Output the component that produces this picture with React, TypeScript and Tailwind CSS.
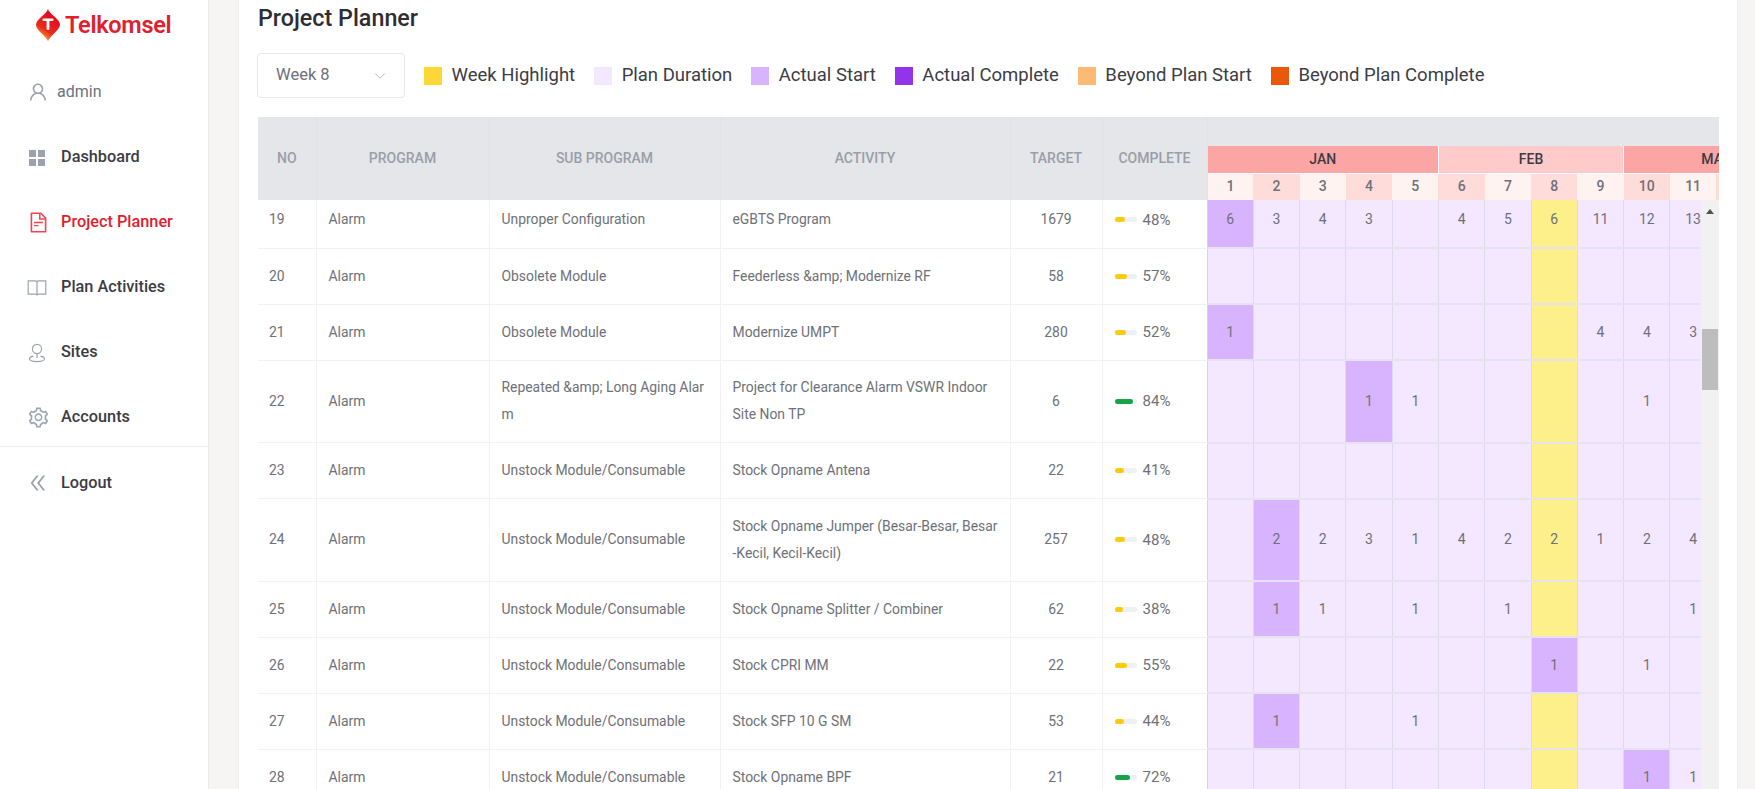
import { AiOutlineDoubleLeft, AiOutlineFileText, AiOutlineSetting, AiOutlineUser } from 'react-icons/ai';
import { ChevronDown } from 'lucide-react';
import type { ReactNode } from 'react';

const SitesIcon = () => (
  <svg width="20" height="20" viewBox="0 0 20 20" fill="none" stroke="currentColor" strokeWidth="1.2">
    <circle cx="10" cy="6" r="4.6" />
    <path d="M10 10.6V15" />
    <path d="M6.5 13.2C4.2 13.7 2.5 14.6 2.5 15.8C2.5 17.5 6 18.6 10 18.6C14 18.6 17.5 17.5 17.5 15.8C17.5 14.6 15.8 13.7 13.5 13.2" />
  </svg>
);

const GridIcon = () => (
  <svg width="20" height="20" viewBox="0 0 20 20" fill="currentColor">
    <rect x="2" y="2" width="7" height="7" />
    <rect x="11" y="2" width="7" height="7" />
    <rect x="2" y="11" width="7" height="7" />
    <rect x="11" y="11" width="7" height="7" />
  </svg>
);

const BookIcon = () => (
  <svg width="20" height="20" viewBox="0 0 20 20" fill="none" stroke="currentColor" strokeWidth="1.2">
    <path d="M10 4.5C10 3.6 9.4 2.8 8.4 2.8H1.2V16.2H8.4C9.4 16.2 10 16.6 10 17.4C10 16.6 10.6 16.2 11.6 16.2H18.8V2.8H11.6C10.6 2.8 10 3.6 10 4.5ZM10 4.5V17.4" />
  </svg>
);

const Logo = () => (
  <div className="h-[59px] pl-[36px] pt-[9px] flex items-start gap-[5px]">
    <svg width="24" height="32" viewBox="0 0 24 32">
      <defs>
        <linearGradient id="flame" x1="0.7" y1="0.2" x2="0.3" y2="1">
          <stop offset="0" stopColor="#e5091e" />
          <stop offset="0.6" stopColor="#ea2a1c" />
          <stop offset="1" stopColor="#f9b233" />
        </linearGradient>
      </defs>
      <path d="M12 0C13 5 24 10 24 15.5C24 21 15 26 12 32C9 26 0 21 0 16C0 10 10 6 12 0Z" fill="url(#flame)" />
      <rect x="6.5" y="9.5" width="11" height="2.6" rx="1" fill="#fff" />
      <rect x="10.6" y="10" width="2.8" height="11" rx="1" fill="#fff" />
    </svg>
    <span className="text-[23.5px] leading-[32px] font-semibold text-[#e0202f] tracking-[-0.3px]">Telkomsel</span>
  </div>
);

const menu: { label: string; icon: ReactNode; active?: boolean }[] = [
  { label: 'Dashboard', icon: <GridIcon /> },
  { label: 'Project Planner', icon: <AiOutlineFileText size={23} />, active: true },
  { label: 'Plan Activities', icon: <BookIcon /> },
  { label: 'Sites', icon: <SitesIcon /> },
  { label: 'Accounts', icon: <AiOutlineSetting size={23} /> },
];

const Sidebar = () => (
  <aside className="w-[209px] shrink-0 bg-white border-r border-[#eeeaea]">
    <Logo />
    <div className="h-[65px] pl-[27px] flex items-center gap-[8px] text-[16px] text-[#6b7280]">
      <span className="text-[#9ca3af]">
        <AiOutlineUser size={22} />
      </span>
      admin
    </div>
    <div className="pt-[1px]">
      {menu.map((item) => (
        <div key={item.label} className={`h-[65px] pl-[27px] flex items-center text-[16.3px] font-medium ${item.active ? 'text-[#e11d2e]' : 'text-[#3b3b44]'}`}>
          <span className={`w-[34px] flex items-center ${item.active ? 'text-[#ef4452]' : 'text-[#9ca3af]'}`}>{item.icon}</span>
          {item.label}
        </div>
      ))}
    </div>
    <div className="-mt-[4px] border-t border-[#f0eeee] h-[73px] pl-[27px] flex items-center text-[16.3px] font-medium text-[#3b3b44]">
      <span className="w-[34px] flex items-center text-[#9ca3af]">
        <AiOutlineDoubleLeft size={22} />
      </span>
      Logout
    </div>
  </aside>
);

const legend = [
  { label: 'Week Highlight', color: 'bg-[#fdd835]' },
  { label: 'Plan Duration', color: 'bg-[#f3e8ff]' },
  { label: 'Actual Start', color: 'bg-[#d8b4fe]' },
  { label: 'Actual Complete', color: 'bg-[#9333ea]' },
  { label: 'Beyond Plan Start', color: 'bg-[#fdba74]' },
  { label: 'Beyond Plan Complete', color: 'bg-[#ea580c]' },
];

const Cols = () => (
  <colgroup>
    <col className="w-[58px]" />
    <col className="w-[173px]" />
    <col className="w-[231px]" />
    <col className="w-[290px]" />
    <col className="w-[92px]" />
    <col className="w-[105px]" />
    {Array.from({ length: 13 }).map((_, i) => (
      <col key={i} className="w-[46.3px]" />
    ))}
  </colgroup>
);

type Row = {
  no: number;
  sub: string;
  activity: string;
  target: number;
  pct: number;
  // week -> number shown in the cell
  cells: Record<number, number>;
  // weeks painted as actual start
  start: number[];
  tall?: boolean;
};

const rows: Row[] = [
  { no: 19, sub: 'Unproper Configuration', activity: 'eGBTS Program', target: 1679, pct: 48, cells: { 1: 6, 2: 3, 3: 4, 4: 3, 6: 4, 7: 5, 8: 6, 9: 11, 10: 12, 11: 13 }, start: [1] },
  { no: 20, sub: 'Obsolete Module', activity: 'Feederless &amp; Modernize RF', target: 58, pct: 57, cells: {}, start: [] },
  { no: 21, sub: 'Obsolete Module', activity: 'Modernize UMPT', target: 280, pct: 52, cells: { 1: 1, 9: 4, 10: 4, 11: 3 }, start: [1] },
  { no: 22, sub: 'Repeated &amp; Long Aging Alarm', activity: 'Project for Clearance Alarm VSWR Indoor Site Non TP', target: 6, pct: 84, cells: { 4: 1, 5: 1, 10: 1 }, start: [4], tall: true },
  { no: 23, sub: 'Unstock Module/Consumable', activity: 'Stock Opname Antena', target: 22, pct: 41, cells: {}, start: [] },
  { no: 24, sub: 'Unstock Module/Consumable', activity: 'Stock Opname Jumper (Besar-Besar, Besar-Kecil, Kecil-Kecil)', target: 257, pct: 48, cells: { 2: 2, 3: 2, 4: 3, 5: 1, 6: 4, 7: 2, 8: 2, 9: 1, 10: 2, 11: 4 }, start: [2], tall: true },
  { no: 25, sub: 'Unstock Module/Consumable', activity: 'Stock Opname Splitter / Combiner', target: 62, pct: 38, cells: { 2: 1, 3: 1, 5: 1, 7: 1, 11: 1 }, start: [2] },
  { no: 26, sub: 'Unstock Module/Consumable', activity: 'Stock CPRI MM', target: 22, pct: 55, cells: { 8: 1, 10: 1 }, start: [8] },
  { no: 27, sub: 'Unstock Module/Consumable', activity: 'Stock SFP 10 G SM', target: 53, pct: 44, cells: { 2: 1, 5: 1 }, start: [2] },
  { no: 28, sub: 'Unstock Module/Consumable', activity: 'Stock Opname BPF', target: 21, pct: 72, cells: { 10: 1, 11: 1 }, start: [10] },
];

const weeks = [1, 2, 3, 4, 5, 6, 7, 8, 9, 10, 11, 12, 13];

const Progress = ({ pct }: { pct: number }) => (
  <div className="flex items-center gap-[6px] pl-[12px]">
    <div className="w-[22px] h-[5px] rounded-full bg-[#edf0f5]">
      <div className={`h-[5px] rounded-full ${pct >= 70 ? 'bg-[#16a34a]' : 'bg-[#fdcb0a]'}`} style={{ width: `${pct}%` }} />
    </div>
    <span className="text-[15px] text-[#6e7178]">{pct}%</span>
  </div>
);

const thClass = 'border-r border-[#dfe1e6] text-[14px] font-medium text-[#9a9ea6] uppercase';
const tdClass = 'border-r border-b border-[#f1f2f4] px-[12px] text-[13.9px] text-[#6e7178] leading-[27px]';

const Planner = () => (
  <div className="mt-[19px] w-[1461px]">
    <div className="overflow-hidden">
      <table className="table-fixed w-[1551px] border-collapse bg-[#e4e6ea]">
        <Cols />
        <thead>
          <tr className="h-[29px]">
            <th rowSpan={3} className={thClass}>NO</th>
            <th rowSpan={3} className={thClass}>PROGRAM</th>
            <th rowSpan={3} className={thClass}>SUB PROGRAM</th>
            <th rowSpan={3} className={thClass}>ACTIVITY</th>
            <th rowSpan={3} className={thClass}>TARGET</th>
            <th rowSpan={3} className={thClass}>COMPLETE</th>
            <th colSpan={13} />
          </tr>
          <tr className="h-[27px] text-[14px] text-[#3b3b44]">
            <th colSpan={5} className="bg-[#fca5a5] border-r border-b border-white font-medium">JAN</th>
            <th colSpan={4} className="bg-[#fecaca] border-r border-b border-white font-medium">FEB</th>
            <th colSpan={4} className="bg-[#fca5a5] border-b border-white font-medium">MAR</th>
          </tr>
          <tr className="h-[27px] text-[14px] text-[#6e7178]">
            {weeks.map((w) => (
              <th key={w} className={`font-medium ${w % 2 === 0 ? 'bg-[#fedcda]' : 'bg-[#fff3f2]'}`}>{w}</th>
            ))}
          </tr>
        </thead>
      </table>
    </div>
    <div className="flex">
      <div className="w-[1443px] h-[600px] overflow-hidden">
        <table className="table-fixed w-[1551px] border-collapse -mt-[8px]">
          <Cols />
          <tbody>
            {rows.map((row) => (
              <tr key={row.no} className={row.tall ? 'h-[82.5px]' : 'h-[56px]'}>
                <td className={`${tdClass} !px-[11px]`}>{row.no}</td>
                <td className={tdClass}>Alarm</td>
                <td className={`${tdClass} break-all`}>{row.sub}</td>
                <td className={`${tdClass} !pr-[11px] break-all`}>{row.activity}</td>
                <td className={`${tdClass} text-center`}>{row.target}</td>
                <td className="border-r border-b border-[#f1f2f4] border-r-[#d5d3e0]">
                  <Progress pct={row.pct} />
                </td>
                {weeks.map((w) => {
                  let bg = 'bg-[#f3e8ff]';
                  if (w === 8) bg = 'bg-[#fdf08a]';
                  if (row.start.includes(w)) bg = 'bg-[#d8b4fe]';
                  return (
                    <td key={w} className={`${bg} border-r border-b-2 border-r-[#dedbe9] border-b-[#e6e2ef] text-center text-[14px] text-[#6e7178]`}>
                      {row.cells[w]}
                    </td>
                  );
                })}
              </tr>
            ))}
          </tbody>
        </table>
      </div>
      <div className="w-[18px] h-[600px] bg-[#f1f1f1] px-[1px]">
        <div className="h-[129px] pt-[9px] flex justify-center items-start">
          <div className="w-0 h-0 border-x-[4px] border-x-transparent border-b-[5px] border-b-[#505050]" />
        </div>
        <div className="h-[61px] bg-[#bdbdbd]" />
      </div>
    </div>
  </div>
);

export default function App() {
  return (
    <div className="h-screen overflow-hidden flex bg-[#f7f4f4] font-['Roboto',sans-serif]">
      <Sidebar />
      <main className="ml-[29px] w-[1500px] bg-white border-x border-[#f0eeee] px-[19px]">
        <h1 className="h-[53px] pt-[3px] text-[23.3px] leading-[30px] font-medium text-[#2d2d33]">Project Planner</h1>
        <div className="flex items-center">
          <div className="-ml-[1px] w-[148px] h-[45px] px-[18px] flex items-center justify-between bg-white border border-[#e5e7eb] rounded-[4px] text-[16.5px] text-[#6e7178]">
            Week 8
            <ChevronDown size={18} strokeWidth={1} className="text-[#9ca3af] -mr-[3px]" />
          </div>
          <div className="ml-[19px] flex items-center gap-[19px]">
            {legend.map((l) => (
              <div key={l.label} className="flex items-center gap-[9.5px] text-[18.5px] text-[#3b3d45]">
                <span className={`w-[18px] h-[18px] ${l.color}`} />
                {l.label}
              </div>
            ))}
          </div>
        </div>
        <Planner />
      </main>
    </div>
  );
}
